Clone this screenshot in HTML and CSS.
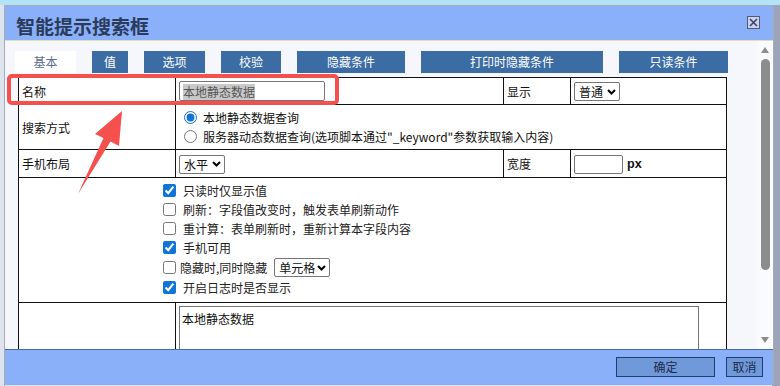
FILE: index.html
```html
<!DOCTYPE html>
<html>
<head>
    <meta charset="utf-8">
    <title>智能提示搜索框</title>
    <link rel="stylesheet" href="styles.css">
</head>
<body>
    <div class="dialog">
        <div class="dlg-title">
            <span class="title-text">智能提示搜索框</span>
            <span class="close">
                <svg width="13" height="13" viewBox="0 0 13 13">
                    <rect x="0.5" y="0.5" width="12" height="12" fill="#c9d2f2" stroke="#545a72"/>
                    <path d="M3 3 L10 10 M10 3 L3 10" stroke="#3e4460" stroke-width="1.6"/>
                </svg>
            </span>
        </div>

        <div class="dlg-body">
            <div class="content">
                <div class="tabs">
                    <div class="tab active tab-basic">基本</div>
                    <div class="tab tab-value">值</div>
                    <div class="tab tab-opts">选项</div>
                    <div class="tab tab-check">校验</div>
                    <div class="tab tab-hide">隐藏条件</div>
                    <div class="tab tab-print">打印时隐藏条件</div>
                    <div class="tab tab-readonly">只读条件</div>
                </div>

                <table class="form">
                    <colgroup>
                        <col class="c1"><col class="c2"><col class="c3"><col class="c4">
                    </colgroup>
                    <tr class="r1">
                        <td>名称</td>
                        <td><div class="textbox"><span class="sel">本地静态数据</span></div></td>
                        <td>显示</td>
                        <td><select class="sel-show"><option>普通</option></select></td>
                    </tr>
                    <tr class="r2">
                        <td>搜索方式</td>
                        <td colspan="3" class="radios">
                            <label class="radio"><input type="radio" name="mode" checked>本地静态数据查询</label>
                            <label class="radio"><input type="radio" name="mode">服务器动态数据查询(选项脚本通过"_keyword"参数获取输入内容)</label>
                        </td>
                    </tr>
                    <tr class="r3">
                        <td>手机布局</td>
                        <td><select class="sel-layout"><option>水平</option></select></td>
                        <td>宽度</td>
                        <td><input type="text" class="num"><b class="unit">px</b></td>
                    </tr>
                    <tr class="r4">
                        <td colspan="4" class="opts">
                            <label class="opt"><input type="checkbox" checked>只读时仅显示值</label>
                            <label class="opt"><input type="checkbox">刷新：字段值改变时，触发表单刷新动作</label>
                            <label class="opt"><input type="checkbox">重计算：表单刷新时，重新计算本字段内容</label>
                            <label class="opt"><input type="checkbox" checked>手机可用</label>
                            <label class="opt opt-tight"><input type="checkbox">隐藏时,同时隐藏<select class="sel-cell"><option>单元格</option></select></label>
                            <label class="opt"><input type="checkbox" checked>开启日志时是否显示</label>
                        </td>
                    </tr>
                    <tr class="r5">
                        <td></td>
                        <td colspan="3"><textarea class="memo">本地静态数据</textarea></td>
                    </tr>
                </table>
            </div>

            <div class="scroll">
                <div class="arrow-up"></div>
                <div class="thumb"></div>
                <div class="arrow-down"></div>
            </div>
        </div>

        <div class="dlg-foot">
            <button class="btn btn-ok">确定</button>
            <button class="btn btn-cancel">取消</button>
        </div>
    </div>

    <!-- annotation drawn over the screenshot -->
    <svg class="marks" width="780" height="386" viewBox="0 0 780 386">
        <rect x="9" y="76" width="328" height="27" rx="3" fill="none" stroke="#f4504e" stroke-width="4"/>
        <polygon points="122,111 119,146 110.5,141.5 78,194 103.5,138 95,134" fill="#f4504e"/>
    </svg>
</body>
</html>
```

FILE: styles.css
```css
body {
    margin: 0;
    width: 780px;
    height: 386px;
    overflow: hidden;
    position: relative;
    font-family: "Noto Sans CJK SC", "Noto Sans", sans-serif;
    font-size: 12px;
    color: #111;
    background:
        linear-gradient(#b2e3f7 0, #b2e3f7 5px, transparent 5px),
        linear-gradient(to right, #dde4ee 0, #dde4ee 772px, #9da4ba 772px);
}

.dialog {
    margin: 5px 0 0 4px;
    width: 770px;
    height: 381px;
    box-sizing: border-box;
    border: 1px solid #a8aab6;
    border-bottom: none;
    display: flex;
    flex-direction: column;
}

/* title bar */
.dlg-title {
    height: 34px;
    flex: none;
    background: #8ab0fa;
    border-bottom: 1px solid #e4e0b0;
    display: flex;
    align-items: center;
    justify-content: space-between;
    padding: 0 13px 0 11px;
}
.title-text {
    font-size: 19px;
    font-weight: bold;
    color: #2a3b5c;
    margin-top: 4px;
}
.close {
    display: flex;
    margin-top: -1px;
}

/* body */
.dlg-body {
    height: 308px;
    flex: none;
    display: flex;
    background: #f5f7fc;
    overflow: hidden;
}
.content {
    flex: 1;
    padding: 10px 0 0 10px;
}

.tabs {
    display: flex;
    gap: 16px;
    height: 22px;
}
.tab {
    background: #3b6ca4;
    color: #fff;
    font-size: 12px;
    line-height: 22px;
    text-align: center;
}
.tab.active {
    background: #fff;
    color: #5b6f8e;
}
.tab-basic { width: 61px; }
.tab-value { width: 36px; }
.tab-opts { width: 61px; }
.tab-check { width: 60px; }
.tab-hide { width: 108px; }
.tab-print { width: 182px; }
.tab-readonly { width: 109px; }

/* form table */
.form {
    margin: 4px 0 0 3px;
    width: 708px;
    border-collapse: collapse;
    table-layout: fixed;
    background: #fff;
}
.c1 { width: 157px; }
.c2 { width: 328px; }
.c3 { width: 67px; }
.c4 { width: 156px; }
.form td {
    border: 1px solid #111;
    padding: 0 3px;
    vertical-align: middle;
}
.r1 td { height: 26px; }
.r2 td { height: 44px; }
.r3 td { height: 27px; }
.r4 td { height: 121px; }
.r5 td { height: 90px; vertical-align: top; }

select {
    appearance: none;
    -webkit-appearance: none;
    font-family: inherit;
    font-size: 12px;
    height: 19px;
    box-sizing: border-box;
    padding: 0 0 0 4px;
    color: #111;
    border: 1px solid #767676;
    border-radius: 2px;
    background: #fff url("data:image/svg+xml;utf8,<svg xmlns='http://www.w3.org/2000/svg' width='9' height='6' viewBox='0 0 9 6'><path d='M1 1 L4.5 4.5 L8 1' fill='none' stroke='black' stroke-width='2'/></svg>") no-repeat right 3px center;
    vertical-align: middle;
}
.sel-show, .sel-layout { width: 46px; }
.sel-cell { width: 56px; margin-left: 7px; }

.textbox {
    width: 146px;
    height: 20px;
    box-sizing: border-box;
    border: 1px solid #767676;
    border-radius: 2px;
    padding: 1px 0 0 3px;
}
.sel {
    display: inline-block;
    line-height: 16px;
    background: #c9c9c9;
    color: #555;
}

.radios { padding-top: 3px; }
.radio {
    display: flex;
    align-items: center;
    height: 19px;
}
input[type="radio"], input[type="checkbox"] {
    accent-color: #0f74d8;
}
.radio input {
    margin: 0 6px 0 5px;
}

.num {
    width: 49px;
    height: 19px;
    box-sizing: border-box;
    border: 1px solid #767676;
    border-radius: 2px;
    padding: 0;
    vertical-align: middle;
}
.unit {
    font-family: "Liberation Sans", Arial, sans-serif;
    font-size: 12.6px;
    margin-left: 4px;
    vertical-align: middle;
}

.opts {
    vertical-align: top !important;
    padding: 3px 0 0 144px !important;
    color: #222;
}
.opt {
    display: flex;
    align-items: center;
    height: 19px;
}
.opt input {
    margin: 0 7px 0 0;
}
.opt-tight { height: 21px; }
.opt-tight input { margin-right: 4px; }

.memo {
    display: block;
    width: 520px;
    height: 90px;
    margin-top: 3px;
    box-sizing: border-box;
    border: 1px solid #767676;
    padding: 3px 2px;
    font-family: inherit;
    font-size: 12px;
    line-height: 18px;
    resize: none;
    color: #111;
}

/* scrollbar */
.scroll {
    width: 16px;
    flex: none;
    background: #fafbfe;
    display: flex;
    flex-direction: column;
    padding: 6px 0;
    box-sizing: border-box;
}
.arrow-up, .arrow-down {
    width: 0;
    height: 0;
    margin-left: 4px;
    border-left: 4.5px solid transparent;
    border-right: 4.5px solid transparent;
}
.arrow-up { border-bottom: 6px solid #8c8c8c; }
.arrow-down { border-top: 6px solid #8c8c8c; margin-top: auto; }
.thumb {
    width: 9px;
    height: 211px;
    margin: 6px 0 0 4px;
    background: #8c8c8c;
    border-radius: 5px;
}

/* footer */
.dlg-foot {
    height: 36px;
    flex: none;
    box-sizing: border-box;
    border-top: 1px solid #4a6aa4;
    background: #8ab0fa;
    display: flex;
    justify-content: flex-end;
    align-items: flex-start;
    gap: 11px;
    padding: 7px 10px 0 0;
}
.btn {
    height: 20px;
    box-sizing: border-box;
    border: 1px solid #1f3d70;
    background: #7099da;
    color: #1c2b4c;
    font-family: inherit;
    font-size: 12px;
    padding: 0;
    line-height: 18px;
}
.btn-ok { width: 99px; }
.btn-cancel { width: 37px; }

.marks {
    position: absolute;
    left: 0;
    top: 0;
    pointer-events: none;
}
```
